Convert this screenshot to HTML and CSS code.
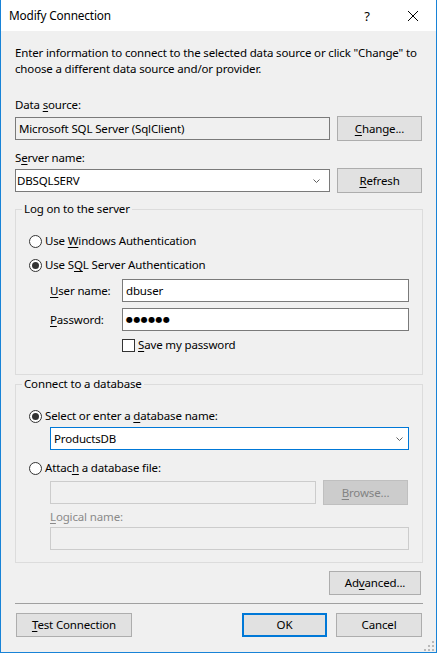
FILE: index.html
```html
<!DOCTYPE html>
<html>
<head>
<meta charset="utf-8">
<link rel="stylesheet" href="styles.css">
</head>
<body>
<div class="window">
  <div class="titlebar">
    <span class="title">Modify Connection</span>
    <span class="tb-btn tb-help">?</span>
    <span class="tb-btn tb-close">
      <svg width="10" height="10" viewBox="0 0 10 10"><path d="M0 0L10 10M10 0L0 10" stroke="#000" stroke-width="1"/></svg>
    </span>
  </div>
  <div class="content">
    <p class="desc">Enter information to connect to the selected data source or click "Change" to choose a different data source and/or provider.</p>

    <div class="label lbl-ds">Data <u>s</u>ource:</div>
    <div class="row row-ds">
      <div class="textbox readonly">Microsoft SQL Server (SqlClient)</div>
      <div class="btn btn-side"><span><u>C</u>hange...</span></div>
    </div>

    <div class="label lbl-sn">S<u>e</u>rver name:</div>
    <div class="row row-sn">
      <div class="combo combo-server">
        <span class="combo-text">DBSQLSERV</span>
        <svg class="chev" width="7" height="4" viewBox="0 0 7 4"><path d="M0.5 0.5L3.5 3.5L6.5 0.5" fill="none" stroke="#606060" stroke-width="1"/></svg>
      </div>
      <div class="btn btn-side"><span><u>R</u>efresh</span></div>
    </div>

    <fieldset class="group group-logon">
      <legend>Log on to the server</legend>
      <div class="group-body">
        <div class="radio-row"><span class="radio"></span><span>Use <u>W</u>indows Authentication</span></div>
        <div class="radio-row radio-second"><span class="radio checked"></span><span>Use S<u>Q</u>L Server Authentication</span></div>
        <div class="field-row field-user">
          <span class="field-label"><u>U</u>ser name:</span>
          <div class="textbox">dbuser</div>
        </div>
        <div class="field-row field-pass">
          <span class="field-label"><u>P</u>assword:</span>
          <div class="textbox pass">●●●●●●</div>
        </div>
        <div class="check-row"><span class="checkbox"></span><span><u>S</u>ave my password</span></div>
      </div>
    </fieldset>

    <fieldset class="group group-db">
      <legend>Connect to a database</legend>
      <div class="group-body body-db">
        <div class="radio-row"><span class="radio checked"></span><span>Select or enter a <u>d</u>atabase name:</span></div>
        <div class="combo combo-db">
          <span class="combo-text">ProductsDB</span>
          <svg class="chev" width="7" height="4" viewBox="0 0 7 4"><path d="M0.5 0.5L3.5 3.5L6.5 0.5" fill="none" stroke="#606060" stroke-width="1"/></svg>
        </div>
        <div class="radio-row radio-attach"><span class="radio"></span><span>Attac<u>h</u> a database file:</span></div>
        <div class="file-row">
          <div class="textbox disabled file-box"></div>
          <div class="btn btn-disabled"><span><u>B</u>rowse...</span></div>
        </div>
        <div class="label-disabled"><u>L</u>ogical name:</div>
        <div class="textbox disabled logical-box"></div>
      </div>
    </fieldset>

    <div class="adv-row">
      <div class="btn btn-adv"><span>Ad<u>v</u>anced...</span></div>
    </div>

    <div class="separator"></div>

    <div class="bottom-row">
      <div class="btn btn-test"><span><u>T</u>est Connection</span></div>
      <div class="btn btn-ok"><span>OK</span></div>
      <div class="btn btn-cancel"><span>Cancel</span></div>
    </div>
  </div>
  <svg class="grip" width="10" height="10" viewBox="0 0 10 10">
    <rect x="8" y="0" width="2" height="2" fill="#b9b9b9"/>
    <rect x="4" y="4" width="2" height="2" fill="#b9b9b9"/>
    <rect x="8" y="4" width="2" height="2" fill="#b9b9b9"/>
    <rect x="0" y="8" width="2" height="2" fill="#b9b9b9"/>
    <rect x="4" y="8" width="2" height="2" fill="#b9b9b9"/>
    <rect x="8" y="8" width="2" height="2" fill="#b9b9b9"/>
  </svg>
</div>
</body>
</html>
```

FILE: styles.css
```css
* { box-sizing: border-box; }
html, body { margin: 0; padding: 0; }
body {
  width: 437px;
  height: 653px;
  font-family: "Noto Sans", "Open Sans", sans-serif;
  font-size: 11.5px;
  letter-spacing: -0.15px;
  line-height: 16px;
  color: #000;
  background: #f0f0f0;
}
u { text-decoration: underline; text-underline-offset: 2px; }

.window {
  position: relative;
  width: 437px;
  height: 653px;
  background: #f0f0f0;
  border-left: 1px solid #1883d7;
  border-right: 1px solid #1883d7;
  border-bottom: 1px solid #1883d7;
  display: flex;
  flex-direction: column;
}

.titlebar {
  height: 31px;
  background: #fff;
  display: flex;
  align-items: center;
  flex: 0 0 auto;
}
.title {
  flex: 1;
  padding-left: 8px;
  padding-bottom: 1px;
  font-size: 11.8px;
}
.tb-btn {
  width: 46px;
  height: 31px;
  display: flex;
  align-items: center;
  justify-content: center;
}
.tb-help { font-size: 13px; }

.content {
  padding: 14px 13px 0 14px;
}

.desc { margin: 0; }

.lbl-ds { margin-top: 20px; }
.lbl-sn { margin-top: 9px; }

.row {
  display: flex;
  align-items: center;
  height: 25px;
  margin-right: 1px;
}
.row-ds { margin-top: 3px; }
.row-sn { margin-top: 2px; }

.textbox {
  height: 23px;
  border: 1px solid #7a7a7a;
  background: #fff;
  padding: 0 3px;
  display: flex;
  align-items: center;
  white-space: nowrap;
}
.row .textbox { flex: 0 0 315px; }
.textbox.readonly { background: #f0f0f0; }
.textbox.disabled { background: #f0f0f0; border-color: #cccccc; }

.combo {
  height: 23px;
  border: 1px solid #7a7a7a;
  background: #fff;
  display: flex;
  align-items: center;
  padding: 0 9px 0 1px;
}
.combo-text { flex: 1; }
.row .combo { flex: 0 0 315px; }
.combo-db {
  margin-top: 3px;
  margin-left: 21px;
  border-color: #0078d7;
  padding-left: 3px;
  padding-right: 5px;
}

.btn {
  height: 24px;
  border: 1px solid #adadad;
  background: #e1e1e1;
  display: flex;
  align-items: center;
  justify-content: center;
  white-space: nowrap;
}
.btn-side { width: 85px; height: 25px; margin-left: auto; }

.group {
  margin: 8px 0 0 0;
  padding: 0;
  border: 1px solid #dcdcdc;
  min-width: 0;
}
.group legend {
  margin-left: 6px;
  padding: 0 2px;
  line-height: 16px;
}
.group-body {
  padding: 16px 13px 21px 13px;
}
.group-db { margin-top: 1px; }
.body-db { padding-bottom: 12px; }

.radio-row {
  display: flex;
  align-items: center;
  height: 16px;
}
.radio-second { margin-top: 8px; }
.radio-attach { margin-top: 10px; }
.radio {
  width: 13px;
  height: 13px;
  border: 1px solid #333;
  border-radius: 50%;
  background: #fff;
  margin-right: 3px;
  display: flex;
  align-items: center;
  justify-content: center;
  flex: 0 0 13px;
}
.radio.checked::after {
  content: "";
  width: 7px;
  height: 7px;
  border-radius: 50%;
  background: #333;
}

.field-row {
  display: flex;
  align-items: center;
  margin-left: 21px;
  margin-top: 6px;
}
.field-label { width: 72px; flex: 0 0 72px; }
.field-row .textbox { flex: 1; }
.pass { font-family: "DejaVu Sans", sans-serif; font-size: 8px; letter-spacing: 0.4px; }

.check-row {
  display: flex;
  align-items: center;
  height: 16px;
  margin-top: 6px;
  margin-left: 93px;
}
.checkbox {
  width: 13px;
  height: 13px;
  border: 1px solid #333;
  background: #fff;
  margin-right: 3px;
  flex: 0 0 13px;
}

.file-row {
  display: flex;
  align-items: center;
  height: 25px;
  margin-top: 4px;
  margin-left: 21px;
  margin-right: 1px;
}
.file-box { width: 266px; }
.btn-disabled {
  width: 85px;
  height: 25px;
  margin-left: auto;
  background: #cccccc;
  border-color: #bfbfbf;
  color: #838383;
}
.label-disabled {
  margin-top: 4px;
  margin-left: 21px;
  color: #8a8a8a;
}
.logical-box { margin-top: 2px; margin-left: 21px; }

.adv-row {
  display: flex;
  justify-content: flex-end;
  margin-top: 8px;
  padding-right: 2px;
}
.btn-adv { width: 92px; }

.separator {
  margin-top: 8px;
  height: 1px;
  background: #a0a0a0;
}

.bottom-row {
  display: flex;
  align-items: center;
  margin-top: 9px;
  padding: 0 1px;
}
.btn-test { width: 116px; }
.btn-ok {
  width: 85px;
  margin-left: auto;
  border: 2px solid #0078d7;
}
.btn-cancel { width: 86px; margin-left: 9px; }

.grip {
  position: absolute;
  right: 2px;
  bottom: 1px;
}
```
